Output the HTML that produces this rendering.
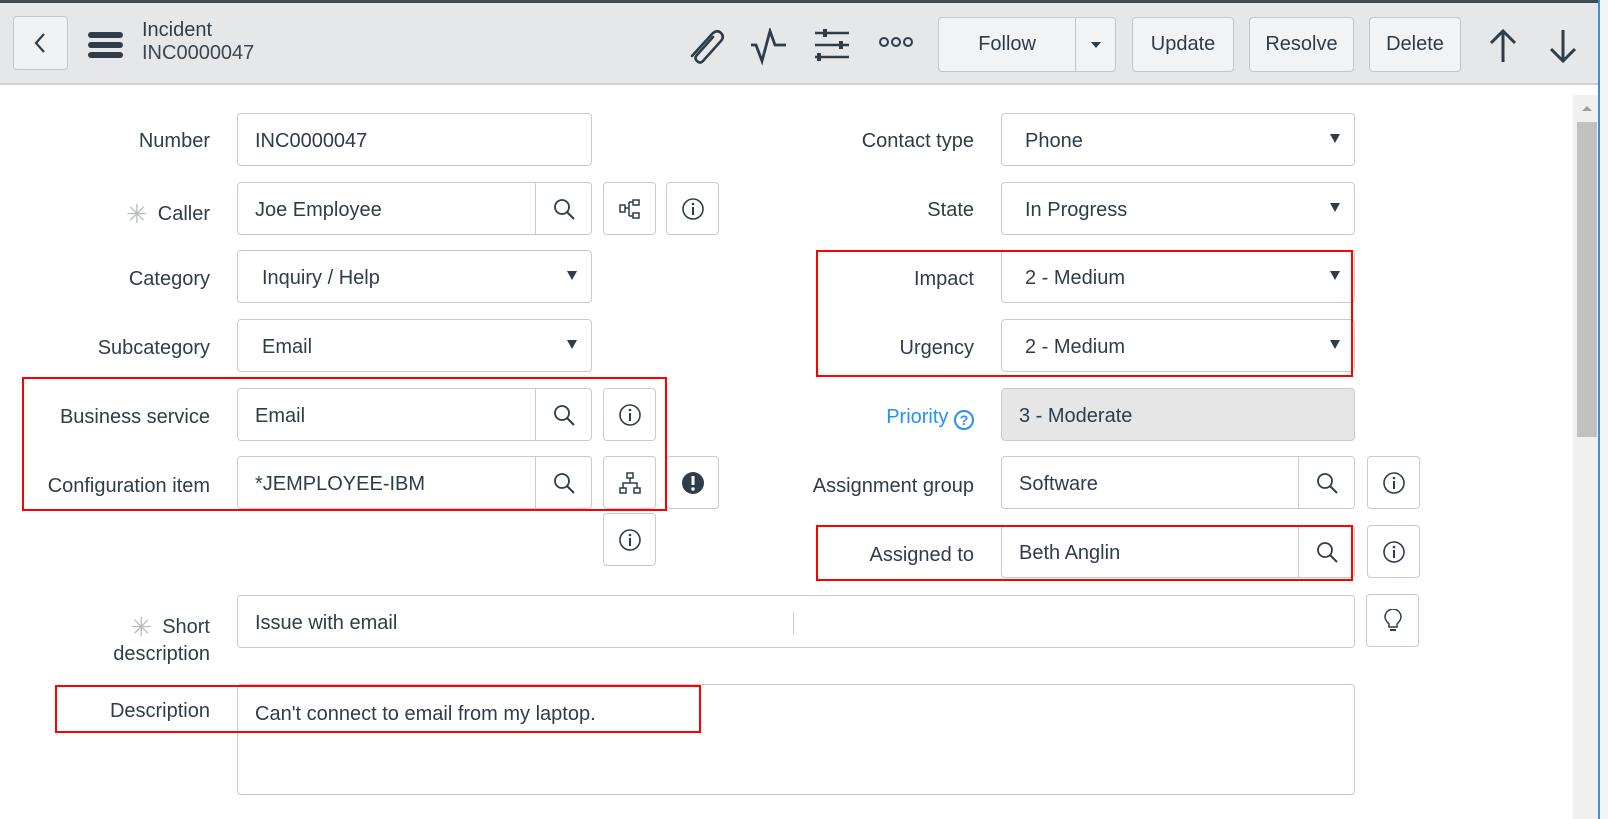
<!DOCTYPE html>
<html><head><meta charset="utf-8"><style>
*{box-sizing:border-box;margin:0;padding:0}
body{width:1608px;height:819px;overflow:hidden;background:#fff;font-family:"Liberation Sans",sans-serif;color:#2e3d49;position:relative}
.a{position:absolute}
.hdr{left:0;top:0;width:1600px;height:85px;background:#e6e7e9;border-top:3px solid #3c4a5a;border-bottom:2px solid #cfd1d3}
.btn{position:absolute;background:#f2f3f5;border:1px solid #c4c6c9;border-radius:4px;font-size:20px;color:#2e3d49;display:flex;align-items:center;justify-content:center}
.lbl{position:absolute;right:1398px;font-size:20px;color:#2e3d49;text-align:right;white-space:nowrap}
.lbr{position:absolute;right:634px;font-size:20px;color:#2e3d49;text-align:right;white-space:nowrap}
.in{position:absolute;height:53px;border:1px solid #c8cbce;border-radius:4px;background:#fff;font-size:20px;padding-left:17px;padding-top:3px;display:flex;align-items:center;color:#2e3d49}
.srch{position:absolute;right:0;top:0;width:56px;height:51px;border-left:1px solid #c8cbce;display:flex;align-items:center;justify-content:center}
.ib{position:absolute;width:53px;height:53px;border:1px solid #c8cbce;border-radius:4px;background:#fff;display:flex;align-items:center;justify-content:center}
.dd{position:absolute;right:14px;top:20px;width:0;height:0;border-left:5px solid transparent;border-right:5px solid transparent;border-top:9px solid #2e3d49}
.red{position:absolute;border:2px solid #f00}
.star{color:#b8bcc0;font-size:26px;vertical-align:-3px;margin-right:10px}
</style></head><body>
<div class="a hdr"></div>
<div class="btn" style="left:13px;top:16px;width:55px;height:54px;background:#f0f1f3"><svg width="20" height="24" viewBox="0 0 20 24"><path d="M13 3 L5 12 L13 21" stroke="#2e3d49" stroke-width="2.2" fill="none"/></svg></div>
<div class="a" style="left:88px;top:32px;width:35px;height:6px;background:#2e3d49;border-radius:3px"></div>
<div class="a" style="left:88px;top:42px;width:35px;height:6px;background:#2e3d49;border-radius:3px"></div>
<div class="a" style="left:88px;top:52px;width:35px;height:6px;background:#2e3d49;border-radius:3px"></div>
<div class="a" style="left:142px;top:19px;font-size:20px">Incident</div>
<div class="a" style="left:142px;top:42px;font-size:20px;color:#3a4752">INC0000047</div>
<svg class="a" style="left:686px;top:26px" width="40" height="38" viewBox="0 0 40 38"><path d="M6 30 L26 8 Q31 3 35 7 Q39 11 34 16 L17 35 Q14 38 11 35 Q8 32 11 29 L27 11" stroke="#2e3d49" stroke-width="2.6" fill="none" stroke-linecap="round"/></svg>
<svg class="a" style="left:750px;top:28px" width="38" height="38" viewBox="0 0 38 38"><path d="M1 17 H6 L12 33 L20 3 L25 17 H36" stroke="#2e3d49" stroke-width="2.8" fill="none"/></svg>
<svg class="a" style="left:814px;top:28px" width="38" height="36" viewBox="0 0 38 36"><path d="M1 5 H35 M1 17 H35 M1 29 H35" stroke="#2e3d49" stroke-width="2.6"/><rect x="9" y="1" width="4" height="8" fill="#2e3d49"/><rect x="25" y="13" width="4" height="8" fill="#2e3d49"/><rect x="3" y="25" width="4" height="8" fill="#2e3d49"/></svg>
<svg class="a" style="left:878px;top:35px" width="36" height="14" viewBox="0 0 36 14"><circle cx="6" cy="7" r="4" stroke="#2e3d49" stroke-width="2" fill="none"/><circle cx="18" cy="7" r="4" stroke="#2e3d49" stroke-width="2" fill="none"/><circle cx="30" cy="7" r="4" stroke="#2e3d49" stroke-width="2" fill="none"/></svg>
<div class="btn" style="left:938px;top:17px;width:178px;height:55px;justify-content:flex-start"><span style="width:137px;text-align:center">Follow</span><span style="border-left:1px solid #c4c6c9;height:53px;width:40px;display:flex;align-items:center;justify-content:center"><span style="border-left:5px solid transparent;border-right:5px solid transparent;border-top:6px solid #2e3d49"></span></span></div>
<div class="btn" style="left:1132px;top:17px;width:102px;height:55px">Update</div>
<div class="btn" style="left:1249px;top:17px;width:105px;height:55px">Resolve</div>
<div class="btn" style="left:1369px;top:17px;width:92px;height:55px">Delete</div>
<svg class="a" style="left:1488px;top:28px" width="30" height="36" viewBox="0 0 30 36"><path d="M15 34 V3 M3 15 L15 3 L27 15" stroke="#2e3d49" stroke-width="3" fill="none"/></svg>
<svg class="a" style="left:1548px;top:28px" width="30" height="36" viewBox="0 0 30 36"><path d="M15 2 V33 M3 21 L15 33 L27 21" stroke="#2e3d49" stroke-width="3" fill="none"/></svg>
<div class="a" style="left:1573px;top:95px;width:25px;height:724px;background:#f0f0f0"></div>
<div class="a" style="left:1582px;top:106px;border-left:5px solid transparent;border-right:5px solid transparent;border-bottom:5px solid #a0a0a0"></div>
<div class="a" style="left:1577px;top:122px;width:20px;height:315px;background:#c1c1c1"></div>
<div class="a" style="left:1598px;top:0;width:2px;height:819px;background:#3d8fd6"></div>
<div class="a" style="left:1600px;top:0;width:8px;height:819px;background:#f4f4f4"></div>

<div class="lbl" style="top:130px">Number</div>
<div class="in" style="left:237px;top:113px;width:355px">INC0000047</div>

<div class="lbl" style="top:199px"><span class="star">✳</span>Caller</div>
<div class="in" style="left:237px;top:182px;width:355px">Joe Employee<div class="srch"><svg width="22" height="22" viewBox="0 0 22 22"><circle cx="9" cy="9" r="7" stroke="#2e3d49" stroke-width="1.8" fill="none"/><path d="M14 14 L21 21" stroke="#2e3d49" stroke-width="2"/></svg></div></div>
<div class="ib" style="left:603px;top:182px"><svg width="24" height="22" viewBox="0 0 24 22"><rect x="2" y="7" width="5" height="7" stroke="#2e3d49" stroke-width="1.5" fill="none"/><rect x="15" y="2" width="6" height="5" stroke="#2e3d49" stroke-width="1.5" fill="none"/><rect x="15" y="15" width="6" height="5" stroke="#2e3d49" stroke-width="1.5" fill="none"/><path d="M7 10 H11 M11 4 V18 M11 4 H15 M11 18 H15" stroke="#2e3d49" stroke-width="1.5" fill="none"/></svg></div>
<div class="ib" style="left:666px;top:182px"><svg width="24" height="24" viewBox="0 0 24 24"><circle cx="12" cy="12" r="10" stroke="#2e3d49" stroke-width="1.6" fill="none"/><circle cx="12" cy="7" r="1.3" fill="#2e3d49"/><path d="M12 10 V18" stroke="#2e3d49" stroke-width="2"/></svg></div>

<div class="lbl" style="top:268px">Category</div>
<div class="in" style="left:237px;top:250px;width:355px;padding-left:24px">Inquiry / Help<div class="dd"></div></div>

<div class="lbl" style="top:337px">Subcategory</div>
<div class="in" style="left:237px;top:319px;width:355px;padding-left:24px">Email<div class="dd"></div></div>

<div class="lbl" style="top:406px">Business service</div>
<div class="in" style="left:237px;top:388px;width:355px">Email<div class="srch"><svg width="22" height="22" viewBox="0 0 22 22"><circle cx="9" cy="9" r="7" stroke="#2e3d49" stroke-width="1.8" fill="none"/><path d="M14 14 L21 21" stroke="#2e3d49" stroke-width="2"/></svg></div></div>
<div class="ib" style="left:603px;top:388px"><svg width="24" height="24" viewBox="0 0 24 24"><circle cx="12" cy="12" r="10" stroke="#2e3d49" stroke-width="1.6" fill="none"/><circle cx="12" cy="7" r="1.3" fill="#2e3d49"/><path d="M12 10 V18" stroke="#2e3d49" stroke-width="2"/></svg></div>

<div class="lbl" style="top:475px">Configuration item</div>
<div class="in" style="left:237px;top:456px;width:355px">*JEMPLOYEE-IBM<div class="srch"><svg width="22" height="22" viewBox="0 0 22 22"><circle cx="9" cy="9" r="7" stroke="#2e3d49" stroke-width="1.8" fill="none"/><path d="M14 14 L21 21" stroke="#2e3d49" stroke-width="2"/></svg></div></div>
<div class="ib" style="left:603px;top:456px"><svg width="24" height="24" viewBox="0 0 24 24"><rect x="9" y="2" width="6" height="5" stroke="#2e3d49" stroke-width="1.5" fill="none"/><rect x="2" y="17" width="6" height="5" stroke="#2e3d49" stroke-width="1.5" fill="none"/><rect x="16" y="17" width="6" height="5" stroke="#2e3d49" stroke-width="1.5" fill="none"/><path d="M12 7 V12 M5 17 V12 H19 V17" stroke="#2e3d49" stroke-width="1.5" fill="none"/></svg></div>
<div class="ib" style="left:666px;top:456px"><svg width="24" height="24" viewBox="0 0 24 24"><circle cx="12" cy="12" r="11" fill="#2e3d49"/><path d="M12 5 V14" stroke="#fff" stroke-width="3"/><circle cx="12" cy="18" r="1.7" fill="#fff"/></svg></div>
<div class="ib" style="left:603px;top:513px"><svg width="24" height="24" viewBox="0 0 24 24"><circle cx="12" cy="12" r="10" stroke="#2e3d49" stroke-width="1.6" fill="none"/><circle cx="12" cy="7" r="1.3" fill="#2e3d49"/><path d="M12 10 V18" stroke="#2e3d49" stroke-width="2"/></svg></div>

<div class="lbr" style="top:130px">Contact type</div>
<div class="in" style="left:1001px;top:113px;width:354px;padding-left:23px">Phone<div class="dd"></div></div>
<div class="lbr" style="top:199px">State</div>
<div class="in" style="left:1001px;top:182px;width:354px;padding-left:23px">In Progress<div class="dd"></div></div>
<div class="lbr" style="top:268px">Impact</div>
<div class="in" style="left:1001px;top:250px;width:354px;padding-left:23px">2 - Medium<div class="dd"></div></div>
<div class="lbr" style="top:337px">Urgency</div>
<div class="in" style="left:1001px;top:319px;width:354px;padding-left:23px">2 - Medium<div class="dd"></div></div>
<div class="lbr" style="top:406px;color:#278efc">Priority <span style="display:inline-block;width:20px;height:20px;border:2px solid #278efc;border-radius:50%;font-size:14px;line-height:16px;text-align:center;font-weight:bold;vertical-align:-2px">?</span></div>
<div class="in" style="left:1001px;top:388px;width:354px;background:#e6e6e7;padding-left:17px">3 - Moderate</div>
<div class="lbr" style="top:475px">Assignment group</div>
<div class="in" style="left:1001px;top:456px;width:354px">Software<div class="srch"><svg width="22" height="22" viewBox="0 0 22 22"><circle cx="9" cy="9" r="7" stroke="#2e3d49" stroke-width="1.8" fill="none"/><path d="M14 14 L21 21" stroke="#2e3d49" stroke-width="2"/></svg></div></div>
<div class="ib" style="left:1367px;top:456px"><svg width="24" height="24" viewBox="0 0 24 24"><circle cx="12" cy="12" r="10" stroke="#2e3d49" stroke-width="1.6" fill="none"/><circle cx="12" cy="7" r="1.3" fill="#2e3d49"/><path d="M12 10 V18" stroke="#2e3d49" stroke-width="2"/></svg></div>
<div class="lbr" style="top:544px">Assigned to</div>
<div class="in" style="left:1001px;top:525px;width:354px">Beth Anglin<div class="srch"><svg width="22" height="22" viewBox="0 0 22 22"><circle cx="9" cy="9" r="7" stroke="#2e3d49" stroke-width="1.8" fill="none"/><path d="M14 14 L21 21" stroke="#2e3d49" stroke-width="2"/></svg></div></div>
<div class="ib" style="left:1367px;top:525px"><svg width="24" height="24" viewBox="0 0 24 24"><circle cx="12" cy="12" r="10" stroke="#2e3d49" stroke-width="1.6" fill="none"/><circle cx="12" cy="7" r="1.3" fill="#2e3d49"/><path d="M12 10 V18" stroke="#2e3d49" stroke-width="2"/></svg></div>

<div class="lbl" style="top:612px"><span class="star">✳</span>Short</div>
<div class="lbl" style="top:643px">description</div>
<div class="in" style="left:237px;top:595px;width:1118px">Issue with email</div>
<div class="a" style="left:793px;top:612px;width:1px;height:22px;background:#ccc"></div>
<div class="ib" style="left:1366px;top:594px"><svg width="18" height="24" viewBox="0 0 18 24"><path d="M5 15 Q1 11 1 8 A8 8 0 0 1 17 8 Q17 11 13 15 V18 H5 Z" stroke="#2e3d49" stroke-width="1.5" fill="none"/><path d="M6 21 H12" stroke="#2e3d49" stroke-width="2"/></svg></div>

<div class="lbl" style="top:700px">Description</div>
<div class="a" style="left:237px;top:684px;width:1118px;height:111px;border:1px solid #c8cbce;border-radius:4px;font-size:20px;padding:18px 0 0 17px">Can't connect to email from my laptop.</div>

<div class="red" style="left:22px;top:377px;width:645px;height:134px"></div>
<div class="red" style="left:816px;top:250px;width:537px;height:127px"></div>
<div class="red" style="left:816px;top:525px;width:537px;height:56px"></div>
<div class="red" style="left:55px;top:685px;width:646px;height:48px"></div>
</body></html>
